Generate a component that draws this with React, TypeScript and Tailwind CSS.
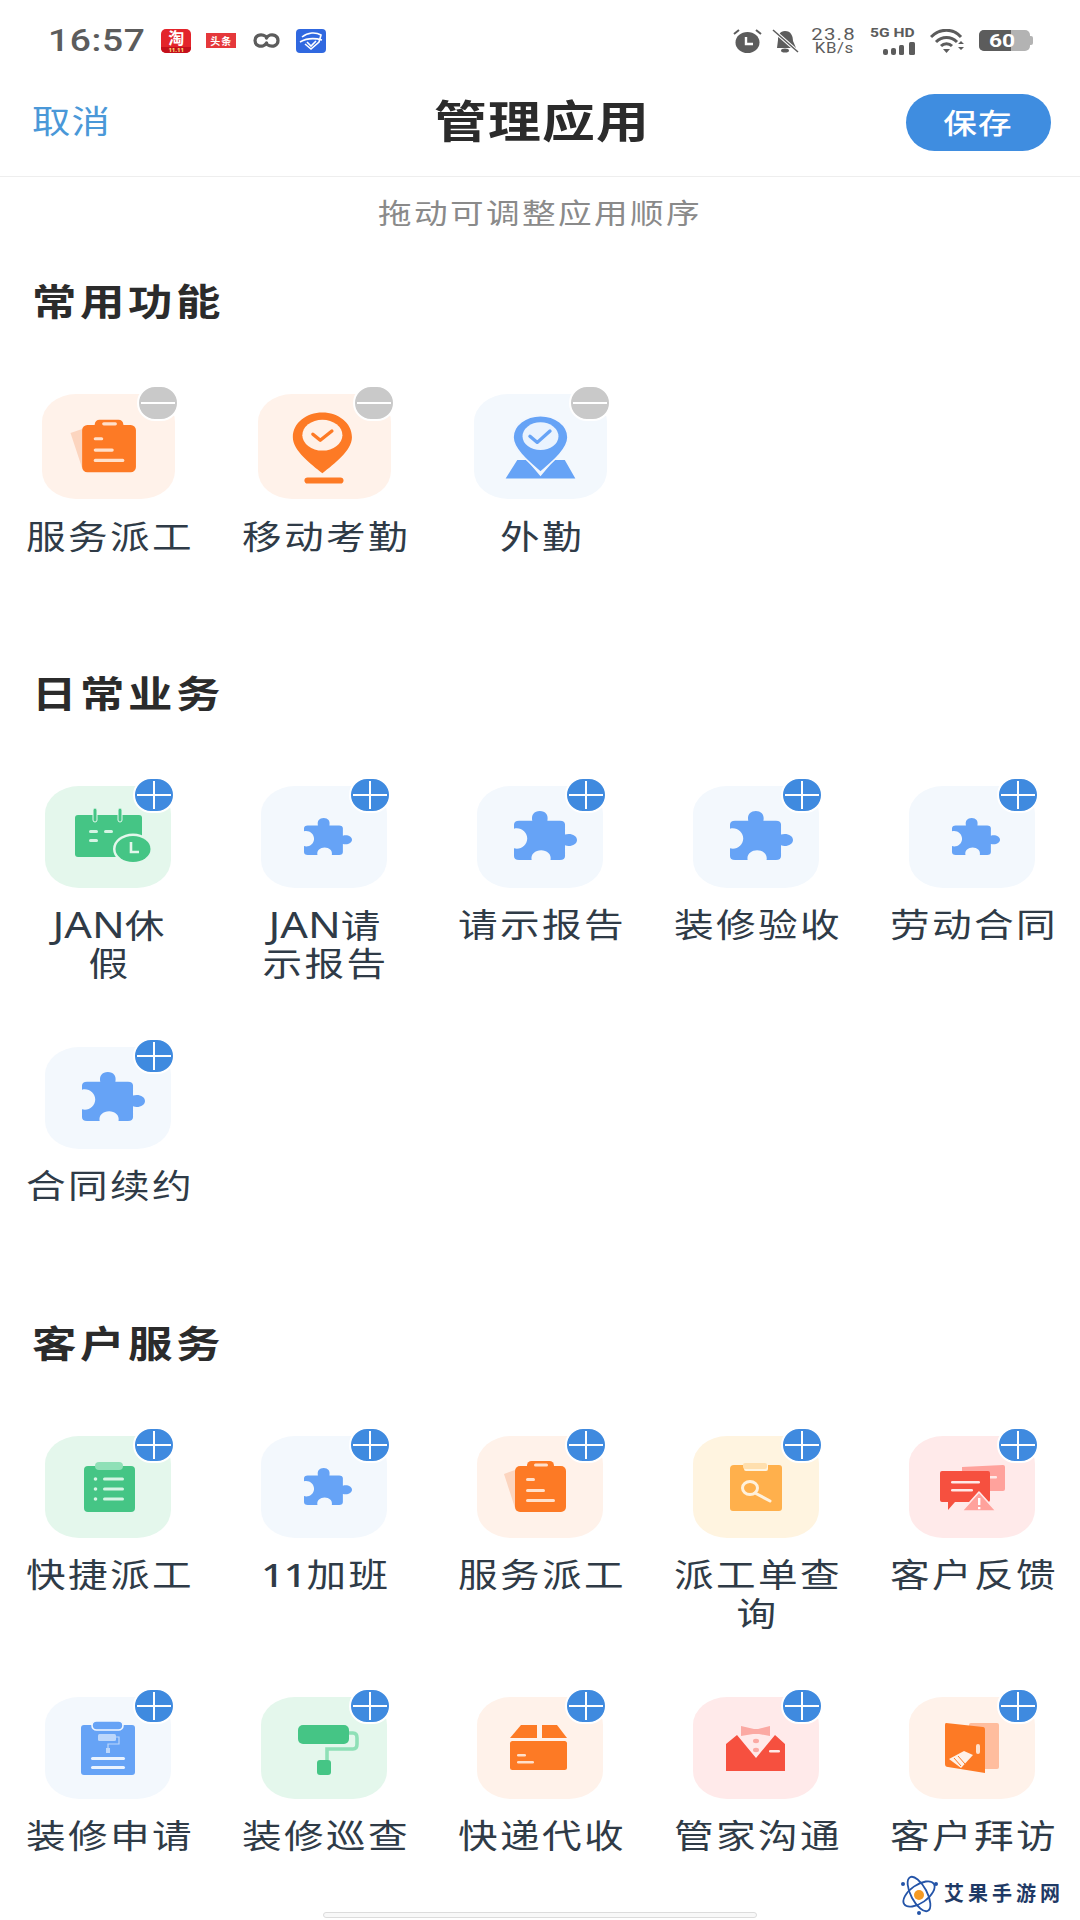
import React from "react";

// Shared wide text wrapper: the app's type is drawn slightly extended.
function Wide({ children, className = "" }: { children: React.ReactNode; className?: string }) {
  return <span className={`inline-block scale-x-[1.2] ${className}`}>{children}</span>;
}

const PUZZLE =
  "M8 20 H29 C27 8 32 0 41 0 C50 0 55 8 53 20 H73 Q81 20 81 28 V48 C90 44 100 50 100 59 C100 68 90 74 81 70 V92 Q81 100 73 100 H58 C60 88 52 80 43 80 C34 80 26 88 28 100 H8 Q0 100 0 92 V76 C10 80 21 70 21 56 C21 42 10 32 0 36 V28 Q0 20 8 20 Z";

function Canvas({ children }: { children: React.ReactNode }) {
  return (
    <svg viewBox="0 0 126 102" preserveAspectRatio="none" className="w-full h-full block">
      {children}
    </svg>
  );
}

const PuzzleSmall = () => (
  <Canvas>
    <path d={PUZZLE} fill="#66a3f6" transform="translate(43 32) scale(.48 .37)" />
  </Canvas>
);
const PuzzleLarge = () => (
  <Canvas>
    <path d={PUZZLE} fill="#66a3f6" transform="translate(37 25) scale(.63 .49)" />
  </Canvas>
);
const OrangeClipboard = () => (
  <Canvas>
    <path d="M38 34 L27 38 L38 72 Z" fill="#fcd5bf" />
    <rect x="38" y="30" width="51" height="46" rx="5" fill="#fd7a25" />
    <rect x="50" y="25" width="27" height="9" rx="4.5" fill="#fd7a25" />
    <rect x="57" y="27.5" width="14" height="3" rx="1.5" fill="#ffe0cb" />
    <rect x="49" y="42" width="9" height="3" rx="1.5" fill="#ffe0cb" />
    <rect x="49" y="53" width="19" height="3" rx="1.5" fill="#ffe0cb" />
    <rect x="49" y="63" width="29" height="3" rx="1.5" fill="#ffe0cb" />
  </Canvas>
);
const PinCheck = () => (
  <Canvas>
    <path d="M61 18 C76 18 89 28 89 42 C89 55 72 68 61 77 C50 68 33 55 33 42 C33 28 46 18 61 18 Z" fill="#fd7a25" />
    <ellipse cx="61" cy="40" rx="19" ry="15" fill="#fff1e8" />
    <path d="M52 39 L59 45 L70 36" fill="none" stroke="#fd7a25" strokeWidth="3.2" strokeLinecap="round" strokeLinejoin="round" />
    <rect x="44" y="81" width="37" height="6" rx="3" fill="#fd7a25" />
  </Canvas>
);
const MapPin = () => (
  <Canvas>
    <path d="M30 82 L41 64 L50 64 L63 80 L76 64 L86 64 L96 82 Z" fill="#66a3f6" />
    <path d="M63 21 C77 21 89 30 89 42 C89 54 73 67 63 76 C53 67 37 54 37 42 C37 30 49 21 63 21 Z" fill="#66a3f6" stroke="#f2f7fe" strokeWidth="1.5" />
    <ellipse cx="63" cy="41" rx="17" ry="13.5" fill="#eaf3fe" />
    <path d="M53 41 L60 47 L72 36" fill="none" stroke="#66a3f6" strokeWidth="3.2" strokeLinecap="round" strokeLinejoin="round" />
  </Canvas>
);
const CalendarClock = () => (
  <Canvas>
    <rect x="30" y="29" width="67" height="42" rx="3" fill="#45c585" />
    <rect x="48" y="22" width="4" height="14" rx="2" fill="#45c585" stroke="#e4f7ec" strokeWidth="1" />
    <rect x="73" y="22" width="4" height="14" rx="2" fill="#45c585" stroke="#e4f7ec" strokeWidth="1" />
    <rect x="44" y="44" width="9" height="3" rx="1.5" fill="#d6f4e4" />
    <rect x="59" y="44" width="9" height="3" rx="1.5" fill="#d6f4e4" />
    <rect x="44" y="53" width="9" height="3" rx="1.5" fill="#d6f4e4" />
    <ellipse cx="88" cy="63" rx="20" ry="15.5" fill="#e4f7ec" />
    <ellipse cx="88" cy="63" rx="17.5" ry="13" fill="#45c585" />
    <path d="M86 56 V66 H94" fill="none" stroke="#e4f7ec" strokeWidth="2.6" />
  </Canvas>
);
const GreenClipboard = () => (
  <Canvas>
    <rect x="39" y="30" width="51" height="46" rx="4" fill="#45c585" />
    <rect x="50" y="26" width="28" height="8" rx="4" fill="#8fe0b7" />
    {[43, 53, 63].map((y) => (
      <g key={y}>
        <circle cx="50.5" cy={y} r="1.8" fill="#d6f4e4" />
        <rect x="58" y={y - 1.5} width="21" height="3" rx="1.5" fill="#d6f4e4" />
      </g>
    ))}
  </Canvas>
);
const SearchClipboard = () => (
  <Canvas>
    <path d="M41 29 H51 V33 Q51 35 53 35 H73 Q75 35 75 33 V29 H86 Q89 29 89 32 V72 Q89 75 86 75 H40 Q37 75 37 72 V33 Q37 29 41 29 Z" fill="#ffb04c" />
    <rect x="50" y="27" width="24" height="6" rx="2" fill="#ffdfae" />
    <ellipse cx="57" cy="52" rx="7.5" ry="6.5" fill="none" stroke="#fff1dc" strokeWidth="3" />
    <path d="M62 57 L77 65" stroke="#fff1dc" strokeWidth="3" strokeLinecap="round" />
  </Canvas>
);
const ChatAlert = () => (
  <Canvas>
    <path d="M53 31 L94 29 Q96 29 96 31 V53 Q96 55 94 55 H53 Z" fill="#ffa29c" />
    <rect x="80" y="40" width="8" height="2.5" rx="1" fill="#ffe9e7" />
    <path d="M33 35 H79 Q81 35 81 37 V64 Q81 66 79 66 H46 L39 74 V66 H33 Q31 66 31 64 V37 Q31 35 33 35 Z" fill="#f6503f" />
    <rect x="42" y="45" width="29" height="2.6" rx="1.3" fill="#ffe9e7" />
    <rect x="42" y="53" width="22" height="2.6" rx="1.3" fill="#ffe9e7" />
    <path d="M70 56 L87 75 H53 Z" fill="#ffa29c" stroke="#ffeaea" strokeWidth="1.6" strokeLinejoin="round" />
    <rect x="69" y="62" width="2.4" height="7" fill="#fff" />
    <rect x="69" y="71" width="2.4" height="2.2" fill="#fff" />
  </Canvas>
);
const RollerClipboard = () => (
  <Canvas>
    <rect x="36" y="28" width="54" height="50" rx="3" fill="#66a3f6" />
    <rect x="47" y="24" width="31" height="9" rx="4.5" fill="#66a3f6" stroke="#f2f7fe" strokeWidth="1.6" />
    <rect x="53" y="37" width="18" height="7" rx="1.5" fill="#bcd7fb" />
    <path d="M71 40 H74 V47 H63 V52" fill="none" stroke="#bcd7fb" strokeWidth="1.2" />
    <rect x="61" y="51" width="4" height="5" fill="#bcd7fb" />
    <rect x="46" y="60" width="34" height="3" rx="1.5" fill="#eaf3fe" />
    <rect x="46" y="69" width="34" height="3" rx="1.5" fill="#eaf3fe" />
  </Canvas>
);
const PaintRoller = () => (
  <Canvas>
    <path d="M88 36 H92 Q96 36 96 41 V47 Q96 52 92 52 H66 V63" fill="none" stroke="#8fe0b7" strokeWidth="3.6" />
    <rect x="37" y="28" width="51" height="19" rx="5" fill="#45c585" />
    <rect x="56" y="63" width="14" height="15" rx="3" fill="#45c585" />
  </Canvas>
);
const ParcelBox = () => (
  <Canvas>
    <path d="M44 28 H60 V41 H33 Z" fill="#fd7a25" />
    <path d="M65 28 H80 L90 41 H65 Z" fill="#fd7a25" />
    <rect x="33" y="44" width="57" height="29" rx="2.5" fill="#fd7a25" />
    <rect x="40" y="57" width="9" height="2.6" rx="1.3" fill="#ffe0cb" />
    <rect x="40" y="64" width="17" height="2.6" rx="1.3" fill="#ffe0cb" />
  </Canvas>
);
const Tuxedo = () => (
  <Canvas>
    <path d="M33 47 L44 38 L63 61 L82 38 L92 47 V74 H33 Z" fill="#f6503f" />
    <path d="M48 29 L61 32 H65 L77 29 V39 L66 37 H60 L48 39 Z" fill="#fba9a3" />
    <ellipse cx="63" cy="44" rx="3" ry="2.2" fill="#fba9a3" />
    <ellipse cx="63" cy="53" rx="3" ry="2.2" fill="#fba9a3" />
    <rect x="76" y="53" width="11" height="2.6" rx="1.3" fill="#ffe9e7" />
  </Canvas>
);
const HandshakeDoor = () => (
  <Canvas>
    <rect x="60" y="26" width="30" height="46" rx="2" fill="#ffbd9e" />
    <path d="M37 26 L74 30 Q76 30 76 33 V76 L39 70 Q36 70 36 67 V28 Q36 26 37 26 Z" fill="#fd7a25" />
    <rect x="67" y="47" width="4" height="10" rx="2" fill="#ffe0cb" />
    <path d="M40 62 L55 54 L64 58 L52 71 Z" fill="#fff1e8" />
    <path d="M45 61 L52 69 M49 59 L56 67" stroke="#fd7a25" strokeWidth="1" />
  </Canvas>
);

type Tint = "green" | "blue" | "orange" | "yellow" | "red";
const TINT: Record<Tint, string> = {
  green: "bg-[#e4f7ec]",
  blue: "bg-[#f3f8fd]",
  orange: "bg-[#fff2ea]",
  yellow: "bg-[#fff4e0]",
  red: "bg-[#ffeaea]",
};

type Line = { text: string; prefix?: string; prefixClass?: string };
type Item = { lines: Line[]; tint: Tint; icon: React.ReactNode };

function RoundBadge({ kind }: { kind: "add" | "remove" }) {
  const fill = kind === "add" ? "bg-[#3f8adf]" : "bg-[#c9c9c9]";
  return (
    <div className={`absolute -top-[9px] -right-[4px] w-[42px] h-[36px] rounded-full border-2 border-white ${fill}`}>
      <svg viewBox="0 0 38 32" className="w-full h-full block">
        <path d="M2 16 H36" stroke="#fff" strokeWidth="2" />
        {kind === "add" && <path d="M19 2 V30" stroke="#fff" strokeWidth="2" />}
      </svg>
    </div>
  );
}

function Tile({ item, kind }: { item: Item; kind: "add" | "remove" }) {
  const big = kind === "remove";
  return (
    <div className="flex flex-col items-center">
      <div
        className={`relative rounded-[34px/28px] ${TINT[item.tint]} ${
          big ? "w-[133px] h-[105px] mb-[18px]" : "w-[126px] h-[102px] mb-[17px]"
        }`}
      >
        {item.icon}
        <RoundBadge kind={kind} />
      </div>
      {item.lines.map((line) => (
        <div key={line.text} className="pl-[3px] h-[39px] leading-[39px] text-[33px] tracking-[2px] text-[#2f3b47] text-center whitespace-nowrap">
          <Wide>
            {line.prefix && <span className={line.prefixClass}>{line.prefix}</span>}
            {line.text}
          </Wide>
        </div>
      ))}
    </div>
  );
}

function Section({ title, items, kind, className }: { title: string; items: Item[]; kind: "add" | "remove"; className: string }) {
  return (
    <section className={className}>
      <h2 className="pl-[32px] h-[48px] leading-[48px] text-[37px] font-bold tracking-[3px] text-[#2b2b2b]">
        <Wide className="origin-left">{title}</Wide>
      </h2>
      <div className="grid grid-cols-5 gap-y-[64px] mt-[68px]">
        {items.map((item, i) => (
          <Tile key={i} item={item} kind={kind} />
        ))}
      </div>
    </section>
  );
}

function StatusBar() {
  return (
    <div className="h-[81px] flex items-center justify-between pl-[48px] pr-[47px]">
      <div className="flex items-center">
        <span className="mr-[32px] text-[31px] leading-[36px] font-medium text-[#5c5c5c] font-['Roboto',sans-serif] tracking-[0.5px] whitespace-nowrap">
          <Wide className="origin-left">16:57</Wide>
        </span>
        <div className="w-[30px] h-[24px] rounded-[5px] bg-[#e3242b] flex flex-col items-center">
          <span className="h-[18px] text-[16px] leading-[18px] font-bold text-white">淘</span>
          <span className="h-[6px] text-[6px] leading-[6px] font-bold text-[#ffe27a] bg-[#c4101c] w-full text-center rounded-b-[5px]">11.11</span>
        </div>
        <div className="ml-[15px] w-[30px] h-[15px] bg-[#e5383b] flex items-center justify-center">
          <span className="text-[10px] leading-none font-bold text-white tracking-[1px] whitespace-nowrap">头条</span>
        </div>
        <svg viewBox="0 0 29 15" className="ml-[16px] w-[29px] h-[15px]">
          <path d="M14 3.5 C11 1.5 8 1.5 6 2.5 C2 4.5 2 10.5 6 12.5 C9 14 13 13 14.5 10" fill="none" stroke="#5c5c5c" strokeWidth="3.2" strokeLinecap="round" />
          <path d="M15 11.5 C18 13.5 21 13.5 23 12.5 C27 10.5 27 4.5 23 2.5 C20 1 16 2 14.5 5" fill="none" stroke="#5c5c5c" strokeWidth="3.2" strokeLinecap="round" />
        </svg>
        <svg viewBox="0 0 30 24" className="ml-[15px] w-[30px] h-[24px]">
          <rect width="30" height="24" rx="4" fill="#3068e0" />
          <path d="M6 8 C12 3 20 3 25 6 L23 13 L15 20 L9 15" fill="none" stroke="#fff" strokeWidth="1.6" />
          <path d="M4 13 C11 9 19 9 26 11" fill="none" stroke="#fff" strokeWidth="1.6" />
          <path d="M11 13 L15 17 L20 12" fill="none" stroke="#fff" strokeWidth="1.6" />
        </svg>
      </div>
      <div className="flex items-center">
        <svg viewBox="0 0 29 24" className="w-[29px] h-[24px]">
          <ellipse cx="14.5" cy="13.5" rx="12" ry="10.5" fill="#5c5c5c" />
          <path d="M1 5 L6 1 M28 5 L23 1" stroke="#5c5c5c" strokeWidth="2" />
          <path d="M13 8 V15 H20" fill="none" stroke="#fff" strokeWidth="2.4" />
        </svg>
        <svg viewBox="0 0 27 24" className="ml-[10px] w-[27px] h-[24px]">
          <path d="M13 2 C19 2 21 7 21 12 L24 19 H5 L6 11 C6 6 8 2 13 2 Z" fill="#5c5c5c" />
          <ellipse cx="13" cy="21.5" rx="4" ry="2" fill="#5c5c5c" />
          <path d="M1 1 L26 23" stroke="#fff" strokeWidth="3.5" />
          <path d="M1 1 L26 23" stroke="#5c5c5c" strokeWidth="1.5" />
        </svg>
        <div className="ml-[13px] w-[44px] flex flex-col items-center text-[#5c5c5c] font-['Roboto',sans-serif]">
          <span className="h-[15px] text-[17px] leading-[15px] tracking-[1px] whitespace-nowrap"><Wide>23.8</Wide></span>
          <span className="h-[13px] text-[14px] leading-[13px] tracking-[0.5px] whitespace-nowrap"><Wide>KB/s</Wide></span>
        </div>
        <div className="ml-[14px] w-[47px] flex flex-col items-end">
          <span className="w-full text-[13px] leading-[12px] font-bold text-[#5c5c5c] font-['Roboto',sans-serif] whitespace-nowrap">
            <Wide className="origin-left">5G HD</Wide>
          </span>
          <svg viewBox="0 0 34 13" className="mt-[3px] w-[34px] h-[13px]">
            <rect x="0" y="7" width="5" height="6" rx="2" fill="#5c5c5c" />
            <rect x="8" y="6" width="5" height="7" rx="2" fill="#5c5c5c" />
            <rect x="16" y="3" width="5" height="10" rx="1.5" fill="#5c5c5c" />
            <rect x="26" y="0" width="6" height="13" rx="1.5" fill="#5c5c5c" />
          </svg>
        </div>
        <svg viewBox="0 0 37 24" className="ml-[13px] w-[37px] h-[24px]">
          <path d="M1 8 C10 -1 23 -1 31 8" fill="none" stroke="#5c5c5c" strokeWidth="3" />
          <path d="M6 13 C12 7 21 7 27 13" fill="none" stroke="#5c5c5c" strokeWidth="3" />
          <path d="M11 17 C14 14 19 14 22 17" fill="none" stroke="#5c5c5c" strokeWidth="3" />
          <path d="M13 20 L20 20 L16.5 24 Z" fill="#5c5c5c" />
          <path d="M31 12 L34 15 H28 Z M28 18 H34 L31 21 Z" fill="#5c5c5c" />
        </svg>
        <div className="ml-[12px] relative w-[54px] h-[21px] flex items-center">
          <div className="w-[51px] h-[21px] rounded-[5px] bg-[#b3b3b3] overflow-hidden">
            <div className="w-[32px] h-full bg-[#5c5c5c]" />
          </div>
          <div className="w-[3px] h-[9px] rounded-r-[2px] bg-[#b3b3b3]" />
          <span className="absolute left-[10px] top-0 text-[19px] leading-[21px] font-bold text-white font-['Roboto',sans-serif]">
            <Wide className="origin-left">60</Wide>
          </span>
        </div>
      </div>
    </div>
  );
}

function Watermark() {
  return (
    <div className="absolute left-[899px] top-[1873px] flex items-center">
      <svg viewBox="0 0 40 42" className="w-[40px] h-[42px]">
        <g fill="none" stroke="#2454a8" strokeWidth="1.8">
          <ellipse cx="20" cy="21" rx="18" ry="9" transform="rotate(-35 20 21)" />
          <ellipse cx="20" cy="21" rx="19" ry="8" transform="rotate(62 20 21)" />
        </g>
        <circle cx="20" cy="22" r="5" fill="#f59a23" />
        <circle cx="4" cy="11" r="2" fill="#2454a8" />
        <circle cx="37" cy="11" r="2" fill="#2454a8" />
        <circle cx="20" cy="40" r="2" fill="#2454a8" />
      </svg>
      <span className="ml-[5px] text-[20px] leading-none font-bold text-[#1f3a66] tracking-[4px] whitespace-nowrap">艾果手游网</span>
    </div>
  );
}

const JAN = "text-[36px] tracking-[0px]";
const one = (text: string): Line[] => [{ text }];

const common: Item[] = [
  { lines: one("服务派工"), tint: "orange", icon: <OrangeClipboard /> },
  { lines: one("移动考勤"), tint: "orange", icon: <PinCheck /> },
  { lines: one("外勤"), tint: "blue", icon: <MapPin /> },
];
const daily: Item[] = [
  { lines: [{ text: "休", prefix: "JAN", prefixClass: JAN }, { text: "假" }], tint: "green", icon: <CalendarClock /> },
  { lines: [{ text: "请", prefix: "JAN", prefixClass: JAN }, { text: "示报告" }], tint: "blue", icon: <PuzzleSmall /> },
  { lines: one("请示报告"), tint: "blue", icon: <PuzzleLarge /> },
  { lines: one("装修验收"), tint: "blue", icon: <PuzzleLarge /> },
  { lines: one("劳动合同"), tint: "blue", icon: <PuzzleSmall /> },
  { lines: one("合同续约"), tint: "blue", icon: <PuzzleLarge /> },
];
const service: Item[] = [
  { lines: one("快捷派工"), tint: "green", icon: <GreenClipboard /> },
  { lines: [{ text: "加班", prefix: "11", prefixClass: "tracking-[0px] font-medium" }], tint: "blue", icon: <PuzzleSmall /> },
  { lines: one("服务派工"), tint: "orange", icon: <OrangeClipboard /> },
  { lines: [{ text: "派工单查" }, { text: "询" }], tint: "yellow", icon: <SearchClipboard /> },
  { lines: one("客户反馈"), tint: "red", icon: <ChatAlert /> },
  { lines: one("装修申请"), tint: "blue", icon: <RollerClipboard /> },
  { lines: one("装修巡查"), tint: "green", icon: <PaintRoller /> },
  { lines: one("快递代收"), tint: "orange", icon: <ParcelBox /> },
  { lines: one("管家沟通"), tint: "red", icon: <Tuxedo /> },
  { lines: one("客户拜访"), tint: "orange", icon: <HandshakeDoor /> },
];

export default function App() {
  return (
    <div className="relative w-[1080px] h-[1920px] overflow-hidden bg-white font-['Noto_Sans','Noto_Sans_CJK_SC',sans-serif]">
      <StatusBar />
      <header className="h-[96px] pb-[16px] pl-[32px] pr-[29px] flex items-center justify-between border-b border-[#eeeeee]">
        <span className="text-[32px] tracking-[1px] text-[#4a98d8] whitespace-nowrap w-[145px]">
          <Wide className="origin-left">取消</Wide>
        </span>
        <h1 className="text-[44px] font-bold tracking-[1px] text-[#2b2b2b] whitespace-nowrap">
          <Wide>管理应用</Wide>
        </h1>
        <button className="w-[145px] h-[57px] rounded-full bg-[#3f8de0] text-white text-[28px] font-medium tracking-[1px] translate-y-[2px]">
          <Wide>保存</Wide>
        </button>
      </header>
      <p className="h-[72px] leading-[72px] text-center text-[28px] tracking-[2px] text-[#8a8a8a]">
        <Wide>拖动可调整应用顺序</Wide>
      </p>
      <Section title="常用功能" items={common} kind="remove" className="mt-[29px]" />
      <Section title="日常业务" items={daily} kind="add" className="mt-[114px]" />
      <Section title="客户服务" items={service} kind="add" className="mt-[115px]" />
      <Watermark />
      <div className="absolute left-[323px] top-[1912px] w-[434px] h-[6px] rounded-full border border-[#dcdcdc] bg-[#f8f8f8]" />
    </div>
  );
}
